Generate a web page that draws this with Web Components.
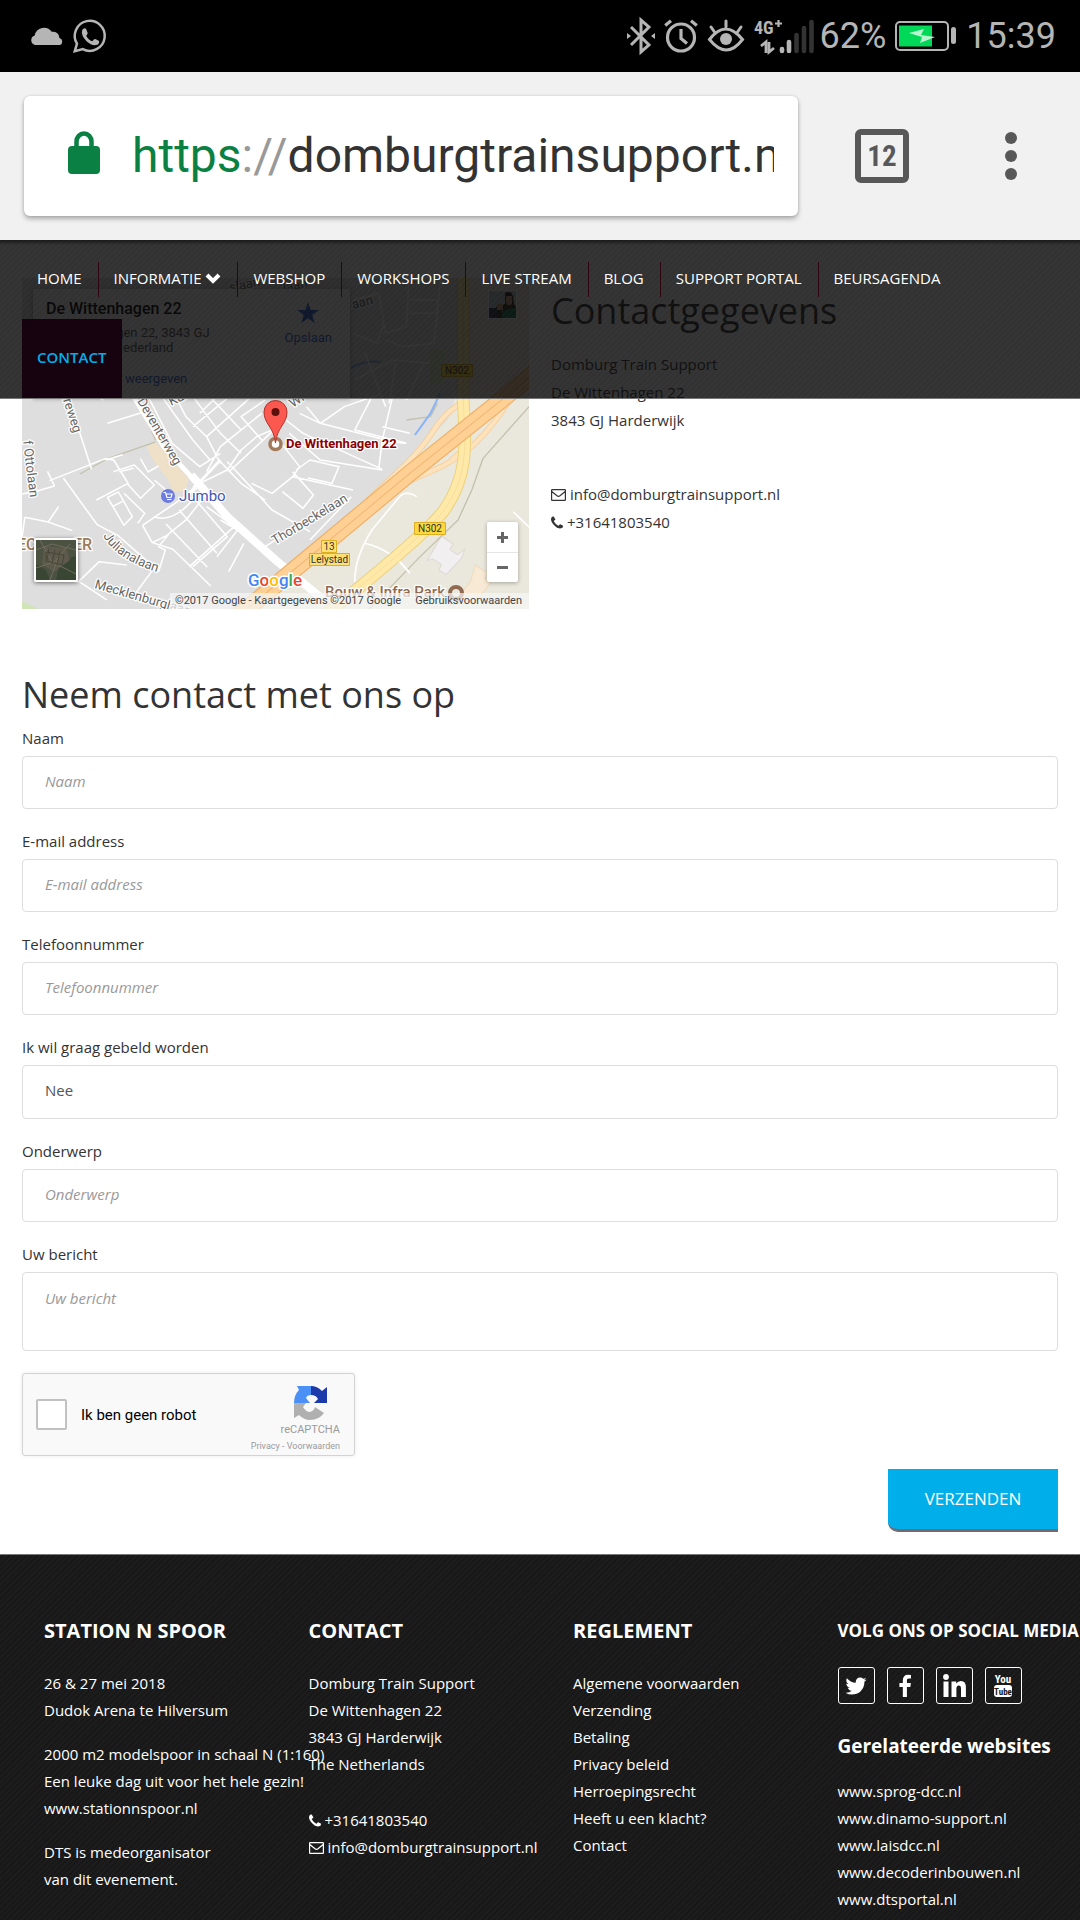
<!DOCTYPE html>
<html lang="nl">
<head>
<meta charset="utf-8">
<meta name="viewport" content="width=device-width, initial-scale=1">
<title>Contact - Domburg Train Support</title>
<style>
html, body { margin: 0; }
body { background: #fff; color: #333; font: 15px/28px "Open Sans", "Noto Sans", sans-serif; }
contact-page { min-height: 100vh; }
</style>
</head>
<body>
<contact-page>
  <status-bar slot="system"></status-bar>
  <browser-bar slot="system"></browser-bar>
  <site-nav slot="nav"></site-nav>
  <location-map slot="intro"></location-map>
  <contact-details slot="intro"></contact-details>
  <contact-form slot="form"></contact-form>
  <site-footer slot="footer">
    <footer-column heading="STATION N SPOOR">
      <p>26 &amp; 27 mei 2018<br>Dudok Arena te Hilversum</p>
      <p>2000 m2 modelspoor in schaal N (1:160)<br>Een leuke dag uit voor het hele gezin!<br><a href="#spoor">www.stationnspoor.nl</a></p>
      <p>DTS is medeorganisator<br>van dit evenement.</p>
    </footer-column>
    <footer-column heading="CONTACT" class="loose">
      <p>Domburg Train Support<br>De Wittenhagen 22<br>3843 GJ Harderwijk<br>The Netherlands</p>
      <p><line-icon name="phone"></line-icon> +31641803540<br><line-icon name="mail"></line-icon> <a href="#mail">info@domburgtrainsupport.nl</a></p>
    </footer-column>
    <footer-column heading="REGLEMENT">
      <p><a href="#av">Algemene voorwaarden</a><br><a href="#verzending">Verzending</a><br><a href="#betaling">Betaling</a><br><a href="#privacy">Privacy beleid</a><br><a href="#herroeping">Herroepingsrecht</a><br><a href="#klacht">Heeft u een klacht?</a><br><a href="#contact">Contact</a></p>
    </footer-column>
    <footer-column heading="VOLG ONS OP SOCIAL MEDIA" class="social">
      <social-links></social-links>
      <h4>Gerelateerde websites</h4>
      <p><a href="#sprog">www.sprog-dcc.nl</a><br><a href="#dinamo">www.dinamo-support.nl</a><br><a href="#lais">www.laisdcc.nl</a><br><a href="#decoder">www.decoderinbouwen.nl</a><br><a href="#dts">www.dtsportal.nl</a></p>
    </footer-column>
  </site-footer>
</contact-page>

<script>
const define = (name, html) => {
  const template = document.createElement('template');
  template.innerHTML = html;
  customElements.define(name, class extends HTMLElement {
    constructor() {
      super();
      this.attachShadow({ mode: 'open' }).append(template.content.cloneNode(true));
    }
  });
};

define('contact-page', `
<style>
  :host { display: flex; flex-direction: column; overflow-x: clip; }
  .site { position: relative; flex: 1; display: flex; flex-direction: column; }
  .nav { position: absolute; z-index: 5; left: 0; right: 0; top: 0; }
  main { padding: 38px 22px 22px; }
  .intro { display: grid; grid-template-columns: 1fr 1fr; gap: 22px; margin-bottom: 66px; }
  .footer { flex: 1; display: grid; }
</style>
<slot name="system"></slot>
<div class="site">
  <div class="nav"><slot name="nav"></slot></div>
  <main><div class="intro"><slot name="intro"></slot></div><slot name="form"></slot></main>
  <div class="footer"><slot name="footer"></slot></div>
</div>`);

define('status-bar', `
<style>
  :host { display: flex; align-items: center; justify-content: space-between; height: 72px; padding: 0 24px 0 30px; background: #000; color: #b5b5b5; font: 36px/36px Roboto, sans-serif; }
  div { display: flex; align-items: center; gap: 9px; }
  div:first-child { gap: 12px; }
  svg { display: block; flex: none; overflow: visible; }
  .signal { margin-right: -3px; }
</style>
<div>
  <svg width="34" height="20" viewBox="0 0 34 20" fill="#b5b5b5"><path d="M5 19a5 5 0 0 1-.3-9.600 9.500 9.500 0 0 1 17-3.600A6.500 6.500 0 0 1 29.500 12 3.700 3.700 0 0 1 30 19z"/></svg>
  <svg width="34" height="34" viewBox="0 0 34 34" fill="none" stroke="#b5b5b5" stroke-width="2.500"><path d="M1.800 32.200 4 24.700A15 15 0 1 1 9.800 30.100z"/><path fill="#b5b5b5" stroke="none" d="M9.200 11q1.800-2.700 3.800-1.200l1.700 4.200q0 1.200-1.500 2.700 2.200 4.300 6 5.600l2-2q.8-.6 1.600-.1l3.300 1.700q.6 3.500-3.300 4.200-4.300.7-9-3.600Q7.700 16.400 9.200 11z"/></svg>
</div>
<div>
  <svg width="28" height="36" viewBox="0 0 28 36" fill="none" stroke="#b5b5b5" stroke-width="3"><path d="M4 9l18 18-8 7V2l8 7L4 27"/><path d="M0 15l4 3-4 3zM28 15l-4 3 4 3z" fill="#b5b5b5" stroke="none"/></svg>
  <svg width="34" height="34" viewBox="0 0 34 34" fill="none" stroke="#b5b5b5" stroke-width="3.200"><circle cx="17" cy="18.500" r="13.500"/><path d="M17 10v9.500l6 5M1.200 6.500 7 1.800M32.800 6.500 27 1.800"/></svg>
  <svg width="38" height="34" viewBox="0 0 38 34" fill="none" stroke="#b5b5b5" stroke-width="3" stroke-linecap="round"><path d="M2.500 20.500q16-21 33 0-16 21-33 0zM19 2v6M4 8l3.500 5M34 8l-3.500 5"/><circle cx="19" cy="20" r="6" fill="#b5b5b5" stroke="none"/></svg>
  <svg class="signal" width="60" height="34" viewBox="0 0 60 34"><text x="0" y="15" font-family="Roboto Condensed, Liberation Sans Narrow, sans-serif" font-size="18" font-weight="700" fill="#b5b5b5">4G</text><path d="M21 4.500h7M24.500 1v7" stroke="#b5b5b5" stroke-width="2.200"/><path d="M7 27l5-4v11M15 23v10l5-4" fill="none" stroke="#b5b5b5" stroke-width="2.800"/><g stroke-width="4.600" stroke-linecap="round" stroke="#b5b5b5"><path d="M28 30v2M35 23v9"/><g stroke="#333"><path d="M42.500 16v16M50 9v23M57.500 3v29"/></g></g></svg>
  <span>62%</span>
  <svg width="62" height="30" viewBox="0 0 62 30"><rect x="1" y="1" width="52" height="28" rx="4" fill="none" stroke="#b5b5b5" stroke-width="2"/><path d="M4 4.500h33v21H4z" fill="#00d858"/><path d="M14 12l15-4-3 6 14 2-15 6 2-6z" fill="#b9f5cf"/><rect x="56" y="6" width="5" height="17" rx="2.500" fill="#b5b5b5"/></svg>
  <span>15:39</span>
</div>`);

define('browser-bar', `
<style>
  :host { display: flex; align-items: center; height: 168px; padding: 0 24px; box-sizing: border-box; background: #f1f1f1; }
  .address { flex: 1; min-width: 0; display: flex; align-items: center; height: 120px; box-sizing: border-box; padding: 0 24px 0 44px; background: #fff; border-radius: 6px; box-shadow: 0 3px 5px rgba(0,0,0,.28), 0 0 3px rgba(0,0,0,.12); }
  .address svg { margin-bottom: 6px; }
  .url { flex: 1; overflow: hidden; white-space: nowrap; margin-left: 32px; font: 48px/60px Roboto, sans-serif; color: #333; }
  .scheme { color: #0b8043; } .sep { color: #999; }
  button { all: unset; box-sizing: border-box; flex: none; color: #585858; }
  .tabs { margin: 0 96px 0 57px; width: 54px; height: 54px; border: 6px solid #585858; border-radius: 6px; text-align: center; font: bold 29px/42px "Roboto Condensed", "Liberation Sans Narrow", sans-serif; }
  .menu { width: 12px; margin-right: 39px; }
  svg { display: block; flex: none; }
</style>
<div class="address">
  <svg width="32" height="44" viewBox="0 0 32 44"><rect y="15" width="32" height="28" rx="4" fill="#0b8043"/><path d="M8.500 17v-6.500a7.500 8 0 0 1 15 0V17" fill="none" stroke="#0b8043" stroke-width="4.500"/></svg>
  <div class="url"><span class="scheme">https</span><span class="sep">://</span>domburgtrainsupport.nl</div>
</div>
<button class="tabs" aria-label="Tabbladen">12</button>
<button class="menu" aria-label="Menu"><svg width="12" height="48" fill="#585858"><circle cx="6" cy="6" r="6"/><circle cx="6" cy="24" r="6"/><circle cx="6" cy="42" r="6"/></svg></button>`);

define('site-nav', `
<style>
  :host { display: block; border-bottom: 1px solid #777; color: #fff;
    background: linear-gradient(rgba(0,0,0,.5), transparent 5px), repeating-linear-gradient(135deg, rgba(255,255,255,.015) 0 2px, transparent 2px 4px), rgba(8,8,8,.83); }
  nav { display: flex; flex-wrap: wrap; padding: 0 44px 0 22px; }
  a { position: relative; padding: 0 16px 2px 15px; line-height: 77px; color: inherit; text-decoration: none; white-space: nowrap; }
  a.line { border-right: 1px solid transparent; border-image: linear-gradient(transparent 22px, #300512 22px 57px, transparent 57px) 1; }
  a.active { background: #16030f; color: #00aeea; font-weight: 600; }
  svg { vertical-align: -1px; }
</style>
<nav>
  <a class="line" href="#home">HOME</a><a class="line" href="#informatie">INFORMATIE <svg width="16" height="12" viewBox="0 0 16 12"><path d="M2 2l6 6 6-6" fill="none" stroke="#fff" stroke-width="4"/></svg></a><a class="line" href="#webshop">WEBSHOP</a><a class="line" href="#workshops">WORKSHOPS</a><a class="line" href="#live">LIVE STREAM</a><a class="line" href="#blog">BLOG</a><a class="line" href="#support">SUPPORT PORTAL</a><a href="#beurs">BEURSAGENDA</a><a class="active" href="#contact">CONTACT</a>
</nav>`);

define('line-icon', `
<style>
  :host { display: inline-block; }
  svg { display: none; vertical-align: -1px; fill: currentColor; }
  :host([name=phone]) .phone, :host([name=mail]) .mail { display: inline-block; }
</style>
<svg class="phone" width="12" height="13" viewBox="192 256 1408 1408" preserveAspectRatio="xMinYMid"><path d="M1600 1240q0 27-10 70.500t-21 68.500q-21 50-122 106-94 51-186 51-27 0-53-3.500t-57.500-12.500-47-14.500-55.500-20.500-49-18q-98-35-175-83-127-79-264-216t-216-264q-48-77-83-175-3-9-18-49t-20.500-55.500-14.500-47-12.500-57.500-3.500-53q0-92 51-186 56-101 106-122 25-11 68.500-21t70.500-10q14 0 21 3 18 6 53 76 11 19 30 54t35 63.500 31 53.500q3 4 17.500 25t21.500 35.500 7 28.500q0 20-28.500 50t-62 55-62 53-28.500 46q0 9 5 22.500t8.500 20.500 14 24 11.500 19q76 137 174 235t235 174q2 1 19 11.500t24 14 20.500 8.500 22.500 5q18 0 46-28.500t53-62 55-62 50-28.500q14 0 28.500 7t35.500 21.500 25 17.500q25 15 53.500 31t63.500 35 54 30q70 35 76 53 3 7 3 21z" transform="translate(0 128)"/></svg>
<svg class="mail" width="15" height="12" viewBox="0 0 15 12"><path d="M1.200.6h12.600q.6 0 .6.600v9.600q0 .6-.6.600H1.200q-.6 0-.6-.6V1.200q0-.6.6-.6zM.8 2.500l5.200 4.300q1.500 1 3 0l5.200-4.300" fill="none" stroke="currentColor" stroke-width="1.200"/></svg>`);

define('contact-details', `
<style>
  :host { display: block; }
  h2 { margin: 12px 0 18px; font-size: 36px; line-height: 42px; font-weight: 400; }
  p { margin: 0 0 46px; }
  a { color: inherit; text-decoration: none; }
</style>
<h2>Contactgegevens</h2>
<p>Domburg Train Support<br>De Wittenhagen 22<br>3843 GJ Harderwijk</p>
<p><line-icon name="mail"></line-icon> <a href="#mail">info@domburgtrainsupport.nl</a><br><line-icon name="phone"></line-icon> +31641803540</p>`);

define('location-map', `
<style>
  :host { display: block; position: relative; height: 331px; overflow: hidden; font: 13px/15px Roboto, sans-serif; color: #555; background: #dedede; }
  .canvas { display: block; width: 100%; height: 100%; }
  .canvas text { font-family: Roboto, sans-serif; }
  button { all: unset; box-sizing: border-box; display: block; }
  .card { position: absolute; left: 11px; top: 11px; width: 317px; height: 109px; box-sizing: border-box; padding: 11px 18px 11px 13px; display: flex; justify-content: space-between; background: #fff; box-shadow: 0 1px 4px rgba(0,0,0,.3); }
  .card b { display: block; margin-bottom: 7px; font-size: 16px; line-height: 18px; font-weight: 500; color: #000; }
  .card a { color: #3367d6; text-decoration: none; }
  .card .more { display: block; margin-top: 16px; }
  .save { display: flex; flex-direction: column; align-items: center; gap: 6px; color: #3367d6; padding-top: 2px; height: 60px; }
  .avatar { position: absolute; right: 12px; top: 12px; }
  .sat { position: absolute; left: 12px; bottom: 27px; width: 44px; height: 44px; border: 2px solid #fff; border-radius: 2px; box-shadow: 0 1px 4px rgba(0,0,0,.5); overflow: hidden; }
  .zoom { position: absolute; right: 11px; bottom: 27px; width: 31px; background: #fff; border-radius: 2px; box-shadow: 0 1px 4px rgba(0,0,0,.3); }
  .zoom button { width: 31px; height: 30px; display: grid; place-items: center; }
  .zoom button + button { border-top: 1px solid #e6e6e6; }
  .legal { position: absolute; right: 0; bottom: 0; display: flex; gap: 14px; padding: 0 7px 1px 5px; font-size: 11px; line-height: 15px; color: #444; background: rgba(245,245,245,.72); white-space: nowrap; }
  .legal a { color: inherit; text-decoration: none; }
</style>
<svg class="canvas" viewBox="0 0 507 331" preserveAspectRatio="xMidYMid slice" role="img" aria-label="Kaart van Harderwijk">
  <rect width="507" height="331" fill="#dedede"/>
  <g transform="translate(-22 122) scale(.3444 .3333)" fill="none" stroke-linejoin="round">
    <path fill="#eae8dc" d="M1560-380H1345L1340-60 1300 60 1000 370 680 640H1560z"/>
    <path fill="#cfe5b8" d="M60 602L140 640H60zM1250-150h42l-6 100h-36z"/>
    <path fill="#efe0c8" d="M426 140l26-14 96 110-10 36-34 5-14-34-50-70z"/>
    <g fill="#f1eff0" stroke="#dcdad6" stroke-width="3"><path d="M1282 408l34 24-10 16 22 16 22-16-10 26-44 50-22-14 8-16-26-18-16 6z"/><path fill="#f7e9d4" stroke="#eedcbf" d="M1380 495l36 24-8 16 16 14-50 66-40-30 32-40z"/></g>
    <g stroke="#c4c2ae" stroke-width="4"><path d="M452 126L312 176 232 222M412 30l40 90M1536 20L1402 176 1370 270 1330 360 1220 470 1060 640M1180 60l70-10 20-40"/></g>
    <g stroke="#8ab4f8" stroke-width="6"><path d="M1278-20L1250 40 1205 105M1020-95Q1050-120 1105-115"/></g>
    <g stroke="#fff" stroke-width="4.500">
      <path d="M185 0L232 100 266 208M138 214l20 44-50 15-48 10M144 242L306 176 330 180 372 250 280 300M184 234l98 140 60 32 110 100M72 352L140 366 210 392M72 352l-8 60M140 366l30-46M306 180l50-16M330 215l60-20 58 60-40 40-40-46M346 215l42-10M312 292l32-16 40 74-24 26zM326 320l30-16M408 176l22 40 30-18M448 240l46 40M360 280l60 60-20 30M414 376L528 296 580 260M414 376l28 52 60 20 110 110M442 428l40-20 60-50 60-80M482 372l120 130M520 330l110 130M560 290l100 120-100 90M600 320l80 60-130 120M500 390l-40 50 20 10-20 66M640 360l50 30-60 80M446 350Q500 370 560 300M100 540L230 545 310 600M228 545l60-60 80 10M440 515l-50 70M312 70L420 35M664 515L708 430M664 350v22"/>
      <path d="M430-10L500 130 580 200 640 160M470-10L560 120 610 180M510-10L540 50 600 110 640 190M560-10L640 100 700 160M600-20L700 90M640-20L580 40M690-30L560 80M730-10L600 110M760 40L640 140 600 215M790 90L745 110 700 150 660 210 560 260M660 185L790 330 900 395M635 180L700 250 770 300M664 216L790 95 870 200 850 230 1025 270M770 0L700 50 760 120M840 100L930 180 1110 210M830 60L880 100 1110 208M850 230L790 280 730 250M850 215l60 70-30 40-60-50M860 210l40-30 84 20-20 50-70-16M870 40L930 70 1120 120 1170 130M930 70L890 20M930 70L1000 20 1110-20M1030 90L1080-10M1110 80l80 20M1140-10L1110 120 1100 205M1030 90l150 40"/>
      <path d="M900 420L1020 290M770 440l60-40M1000 365l30-30M1210 290Q1180 270 1160 290L1080 390Q1030 470 1030 545M1060 430Q1140 450 1190 520M1490 335l30 30 20 20M60-100L200-60 300 0M240-140L350-40M1025-300l75-20 20 120 60-20 8-150M1025-200l70 30 20-60M1120-180l50 20 90-10 20-200M1030-60L1140-120 1250-110M1060-140l60 160M1150-120l-20 130M1230-110L1180 0M1190-260h85M1190-300h85"/>
    </g>
    <path stroke="#fff" stroke-width="14" d="M340-90L400 10 475 140 560 236"/><path stroke="#fff" stroke-width="24" d="M555 225L660 350 800 480 940 600"/><path stroke="#fff" stroke-width="8" d="M520 190L596 280M540 290L640 180"/>
    <g stroke="#f3cf9c" stroke-width="17"><path d="M1480 0Q1430 80 1380 130T1250 215 1090 290L1000 390M1335 12Q1290 40 1260 90T1180 190L1060 310M1310 180l60-50"/></g>
    <g stroke="#fde2bb" stroke-width="12"><path d="M1480 0Q1430 80 1380 130T1250 215 1090 290L1000 390M1335 12Q1290 40 1260 90T1180 190L1060 310M1310 180l60-50"/></g>
    <path stroke="#ecd27e" stroke-width="37" d="M1345-400V0C1350 120 1365 220 1290 330Q1240 400 950 640"/><path stroke="#ffe9a8" stroke-width="31" d="M1345-400V0C1350 120 1365 220 1290 330Q1240 400 950 640"/>
    <path stroke="#f5d795" stroke-width="2" d="M1345-400V0C1350 120 1365 220 1290 330Q1240 400 950 640"/>
    <path stroke="#eeb068" stroke-width="52" d="M1580-105L1450 5 1190 220 690 650"/><path stroke="#ffd093" stroke-width="45" d="M1580-105L1450 5 1190 220 690 650"/><path stroke="#efb775" stroke-width="3" d="M1580-105L1450 5 1190 220 690 650"/>
    <path stroke="#fff" stroke-width="5" d="M1160 485l28 32"/>
  </g>
  <g font-size="13" fill="#666" stroke="#fff" stroke-width="2.500" paint-order="stroke" stroke-linejoin="round">
    <text transform="translate(115 123) rotate(60)">Deventerweg</text>
    <text transform="translate(40 119) rotate(72)">lreweg</text>
    <text transform="translate(1 163) rotate(83)">f Ottolaan</text>
    <text transform="translate(149 128) rotate(-25)">Kar</text>
    <text transform="translate(271 130) rotate(-35)">Wi</text>
    <text transform="translate(253 267) rotate(-31)">Thorbeckelaan</text>
    <text transform="translate(72 310) rotate(16)">Mecklenburglaan</text>
    <path id="jl" d="M81 258Q96 284 145 297" fill="none" stroke="none"/><text><textPath href="#jl">Julianalaan</textPath></text>
    <text transform="translate(208 14) rotate(-12)">slaan</text><text transform="translate(262 14) rotate(-12)">laan</text><text transform="translate(331 31) rotate(-14)">aan</text>
    <g fill="#9a7b5a" font-size="16" font-weight="500"><text x="-5" y="272">EC</text><text x="51" y="272">ER</text></g>
    <text x="303" y="319" font-size="15" font-weight="500" fill="#8f6a50">Bouw &amp; Infra Park</text>
    <text x="157" y="223" font-size="15" fill="#4353b8">Jumbo</text>
    <text x="264" y="170" font-weight="700" fill="#8b0000">De Wittenhagen 22</text>
  </g>
  <circle cx="434" cy="315" r="6" fill="none" stroke="#8f6a50" stroke-width="4"/>
  <g><circle cx="146" cy="218" r="7" fill="#6d7be0"/><path d="M141.500 214.500h2l1.500 5h4l1-3.500h-6M145 221.500h4.500" fill="none" stroke="#fff" stroke-width="1.200"/></g>
  <circle cx="253.500" cy="166" r="5.500" fill="#fff" stroke="#a07a5b" stroke-width="3.500"/>
  <path d="M253.500 165C252 149 242 146 242 134a11.500 11.500 0 0 1 23 0C265 146 255 149 253.500 165z" fill="#fb594f" stroke="#b0332b"/><circle cx="253.500" cy="134" r="4" fill="#5c100c"/>
  <g font-size="10" text-anchor="middle" fill="#333"><g stroke="#dcae22"><path fill="#fbd93e" d="M419.500 86.500h31v12h-31zM392.500 244.500h31v12h-31z"/><path fill="#fddf73" d="M299.500 262.500h15v12h-15zM287.500 275.500h40v12h-40z"/></g>
    <text x="435" y="96">N302</text><text x="408" y="254">N302</text><text x="307" y="272">13</text><text x="307.500" y="285">Lelystad</text></g>
  <text x="226" y="308" font-size="17" font-weight="500" stroke="#fff" stroke-width="3" paint-order="stroke"><tspan fill="#4285f4">G</tspan><tspan fill="#ea4335">o</tspan><tspan fill="#fbbc05">o</tspan><tspan fill="#4285f4">g</tspan><tspan fill="#34a853">l</tspan><tspan fill="#ea4335">e</tspan></text>
</svg>
<div class="card">
  <div><b>De Wittenhagen 22</b>De Wittenhagen 22, 3843 GJ<br>Harderwijk, Nederland<a class="more" href="#kaart">Grotere kaart weergeven</a></div>
  <button class="save"><svg width="22" height="22" viewBox="0 0 24 24" fill="#3367d6"><path d="M12 0l2.900 8.700H24l-7.400 5.500 2.800 9L12 17.700l-7.400 5.500 2.800-9L0 8.700h9.100z"/></svg>Opslaan</button>
</div>
<svg class="avatar" width="29" height="29" viewBox="0 0 29 29"><path fill="#fff" d="M0 0h29v29H0z"/><path fill="#b9c8cf" d="M1 1h27v27H1z"/><path fill="#30231e" d="M17 3q6-3 8 3l1 8 2 3v11H8V17l9-3z"/><path fill="#c89579" d="M18 6h6v8q-4 3-6-1zM9 14h6v6H9z"/><path fill="#1b7250" d="M14 21l14-4v11H14z"/><path fill="#2c3947" d="M1 18h8v10H1z"/></svg>
<button class="sat" aria-label="Satelliet"><svg width="40" height="40" viewBox="0 0 40 40"><path fill="#4c5241" d="M0 0h40v40H0z"/><path fill="#3a4634" d="M24 22l16-6v24H20zM0 24l10 6 4 10H0z"/><path fill="#5e5a4b" d="M8 6l22 2 4 12-16 12-12-8z"/><path d="M0 10L16 4 40 10M4 0L16 22 40 34M0 28L18 22 34 4M14 40L22 18" fill="none" stroke="#6f6d5c" stroke-width="1"/><path d="M10 12l18 3-2 10-16-4zM13 8l-2 12m8-10-3 13m8-12-3 14" fill="none" stroke="#454638"/></svg></button>
<div class="zoom"><button aria-label="Inzoomen"><svg width="11" height="11"><path d="M0 5.500h11M5.500 0v11" stroke="#666" stroke-width="3"/></svg></button><button aria-label="Uitzoomen"><svg width="11" height="11"><path d="M0 5.500h11" stroke="#666" stroke-width="3"/></svg></button></div>
<div class="legal"><span>©2017 Google - Kaartgegevens ©2017 Google</span><a href="#voorwaarden">Gebruiksvoorwaarden</a></div>`);

customElements.define('form-field', class extends HTMLElement {
  constructor() {
    super();
    const label = this.getAttribute('label');
    const kind = this.getAttribute('kind') || 'text';
    const control = kind === 'select' ? '<select id="control"><option>Nee</option><option>Ja</option></select>'
      : kind === 'textarea' ? `<textarea id="control" placeholder="${label}"></textarea>`
      : `<input id="control" type="${kind}" placeholder="${label}">`;
    this.attachShadow({ mode: 'open' }).innerHTML = `
<style>
  :host { display: block; margin-bottom: 18px; }
  label { display: block; margin-bottom: 4px; line-height: 28px; }
  input, select, textarea { display: block; width: 100%; height: 53px; box-sizing: border-box; margin: 0; padding: 0 22px 4px; border: 1px solid #ddd; border-radius: 4px; background: #fff; color: #555; font: inherit; line-height: 22px; appearance: none; outline: 0; resize: none; }
  select { height: 54px; }
  textarea { height: 79px; padding: 14px 22px; }
  ::placeholder { color: #999; font-style: italic; opacity: 1; }
</style>
<label for="control">${label}</label>${control}`;
  }
});

define('recaptcha-box', `
<style>
  :host { display: flex; align-items: center; width: 333px; height: 83px; box-sizing: border-box; padding: 0 14px 0 13px; border: 1px solid #d3d3d3; border-radius: 3px; background: #f9f9f9; box-shadow: 0 0 4px rgba(0,0,0,.08); color: #000; font: 15px/20px Roboto, sans-serif; }
  input { appearance: none; width: 31px; height: 31px; margin: 0 14px 0 0; border: 2px solid #c1c1c1; border-radius: 2px; background: #fff; }
  label { flex: 1; }
  .brand { align-self: flex-end; display: flex; flex-direction: column; align-items: flex-end; color: #9b9b9b; font-size: 11px; line-height: 14px; }
  .brand svg { margin: 0 13px 3px 0; }
  small { font-size: 9px; line-height: 18px; }
  a { color: inherit; text-decoration: none; }
</style>
<input type="checkbox" id="robot"><label for="robot">Ik ben geen robot</label>
<div class="brand">
  <svg width="33" height="34" viewBox="0 0 33 34"><path fill="#4a90f5" d="M0 17Q0 9 5 4L3 0h14v9q-4 0-5 3l4 5z"/><path fill="#1c3aa9" d="M17 0q6 0 11 5l5-4v16H20l4-4q-2-4-7-4z"/><path fill="#b0b0b0" d="M0 17h12l-3 4q3 5 7 5 4-1 5-5l9 6q-5 7-14 7-6 0-11-5l-5 3z"/></svg>
  <span>reCAPTCHA</span><small><a href="#privacy">Privacy</a> - <a href="#voorwaarden">Voorwaarden</a></small>
</div>`);

define('contact-form', `
<style>
  :host { display: block; }
  h2 { margin: 0 0 9px; font-size: 36px; line-height: 40px; font-weight: 400; }
  recaptcha-box { margin: 22px 0 13px; }
  .actions { display: flex; justify-content: flex-end; }
  button { height: 63px; width: 170px; padding: 0; border: 0; border-bottom: 3px solid #74696f; border-bottom-left-radius: 10px; background: #00aeea; color: #fff; font: 17px/60px "Open Sans", sans-serif; }
</style>
<h2>Neem contact met ons op</h2>
<form onsubmit="return false">
  <form-field label="Naam"></form-field>
  <form-field label="E-mail address" kind="email"></form-field>
  <form-field label="Telefoonnummer" kind="tel"></form-field>
  <form-field label="Ik wil graag gebeld worden" kind="select"></form-field>
  <form-field label="Onderwerp"></form-field>
  <form-field label="Uw bericht" kind="textarea"></form-field>
  <recaptcha-box></recaptcha-box>
  <div class="actions"><button type="submit">VERZENDEN</button></div>
</form>`);

define('site-footer', `
<style>
  :host { display: grid; grid-template-columns: repeat(4, minmax(0, 1fr)); padding: 62px 0 3px 22px; border-top: 1px solid #777; color: #fff; line-height: 27px;
    background: repeating-linear-gradient(135deg, rgba(255,255,255,.018) 0 2px, transparent 2px 4px), #181818; }
</style><slot></slot>`);

customElements.define('footer-column', class extends HTMLElement {
  constructor() {
    super();
    this.attachShadow({ mode: 'open' }).innerHTML = `
<style>
  :host { display: block; padding-left: 22px; white-space: nowrap; }
  h3 { margin: 0 0 25px; font-size: 20px; line-height: 28px; font-weight: 700; }
  ::slotted(p) { margin: 0 0 17px !important; }
  :host(.loose) ::slotted(p) { margin-bottom: 29px !important; }
  :host(.social) h3 { margin-bottom: 22px; font-size: 17px; }
  :host(.social) ::slotted(p) { margin-bottom: 0 !important; }
  ::slotted(h4) { margin: 28px 0 18px; font-size: 19px; line-height: 28px; font-weight: 700; }
</style>
<h3>${this.getAttribute('heading')}</h3><slot></slot>`;
    this.querySelectorAll('a').forEach(a => { a.style.color = 'inherit'; a.style.textDecoration = 'none'; });
  }
});

define('social-links', `
<style>
  :host { display: flex; gap: 12px; }
  a { box-sizing: border-box; width: 37px; height: 37px; border: 1px solid #fff; border-radius: 3px; display: grid; place-items: center; color: #fff; }
  svg { display: block; fill: currentColor; overflow: visible; }
</style>
<a href="#twitter" aria-label="Twitter"><svg width="24" height="24" viewBox="0 0 1792 1792"><path d="M1684 408q-67 98-162 167 1 14 1 42 0 130-38 259.500t-115.500 248.500-184.500 210.500-258 146-323 54.500q-271 0-496-145 35 4 78 4 225 0 401-138-105-2-188-64.500t-114-159.500q33 5 61 5 43 0 85-11-112-23-185.500-111.500t-73.500-205.500v-4q68 38 146 41-66-44-105-115t-39-154q0-88 44-163 121 149 294.500 238.500t371.500 99.500q-8-38-8-74 0-134 94.500-228.500t228.500-94.500q140 0 236 102 109-21 205-78-37 115-142 178 93-10 186-50z"/></svg></a>
<a href="#facebook" aria-label="Facebook"><svg width="24" height="24" viewBox="0 0 1792 1792"><path d="M1343 12v264h-157q-86 0-116 36t-30 108v189h293l-39 296h-254v759h-306v-759h-255v-296h255v-218q0-186 104-288.500t277-102.500q147 0 228 12z" transform="translate(0 60)"/></svg></a>
<a href="#linkedin" aria-label="LinkedIn"><svg width="23" height="23" viewBox="0 0 23 23"><circle cx="3" cy="3" r="2.900"/><path d="M.5 7.500h5V23h-5zM8.500 7.500h4.700v2.100q1.500-2.500 4.700-2.500 5 0 5 6.400V23H18v-8.500q0-3-2.200-3t-2.400 3V23H8.500z"/></svg></a>
<a href="#youtube" aria-label="YouTube"><svg width="20" height="25" viewBox="0 0 20 25"><text x="10" y="10" text-anchor="middle" font-family="Roboto Condensed, Liberation Sans Narrow, sans-serif" font-weight="700" font-size="11">You</text><rect x="1" y="12" width="18" height="12" rx="3"/><text x="10" y="22" text-anchor="middle" font-family="Roboto Condensed, Liberation Sans Narrow, sans-serif" font-weight="700" font-size="9" fill="#181818">Tube</text></svg></a>`);
</script>
</body>
</html>
